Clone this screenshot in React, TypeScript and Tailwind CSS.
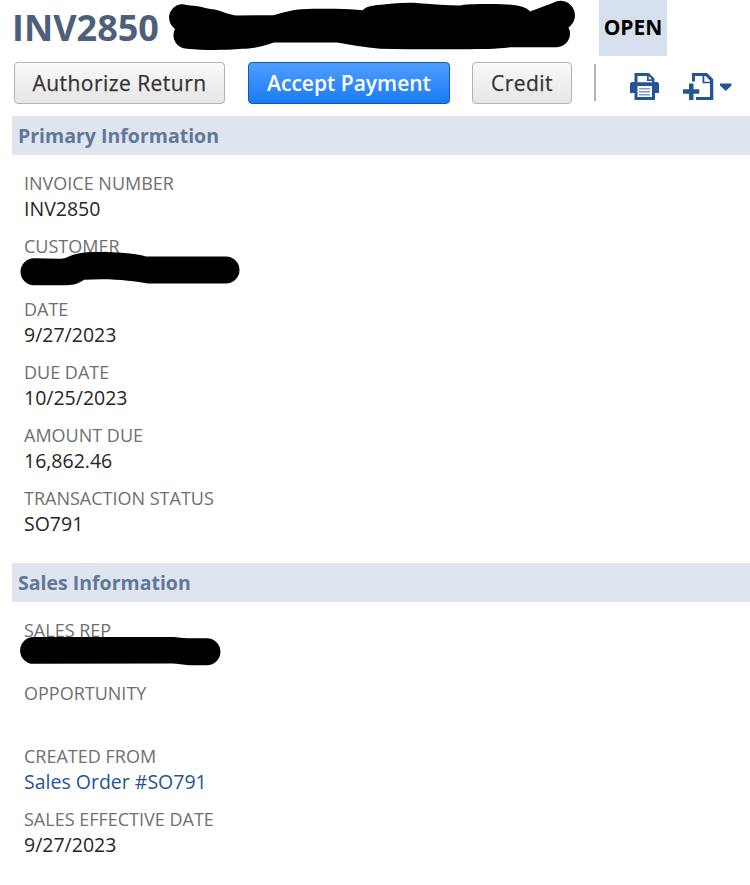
import React from "react";

type FieldData = {
  label: string;
  value?: string;
  link?: boolean;
  redaction?: React.ReactNode;
};

const customerMark = (
  <svg className="absolute -left-1 top-4" width="222" height="36" viewBox="20 251 222 36">
    <path d="M34 258.300 L60 258.700 C70 259 68 252 98 252 C118 252 136 253.500 146 256.500 L226 256.500 A13.500 13.500 0 0 1 226 283.500 L148 283.500 C134 281 112 278 84 279.800 C78 284 74 285 67 285.300 L34 285.300 A13.500 13.500 0 0 1 34 258.300 Z" />
  </svg>
);

const salesRepMark = (
  <svg className="absolute -left-1 top-[17px]" width="204" height="30" viewBox="20 636 204 30">
    <path d="M33.500 637 L173 637 C178 637 182 638.300 188 638.300 L207 638.300 A13.400 13.400 0 0 1 207 665.200 L189 665.200 C183 665.200 178 663.600 172 663.600 L33.500 663.800 A13.400 13.400 0 0 1 33.500 637 Z" />
  </svg>
);

const primaryFields: FieldData[] = [
  { label: "INVOICE NUMBER", value: "INV2850" },
  { label: "CUSTOMER", redaction: customerMark },
  { label: "DATE", value: "9/27/2023" },
  { label: "DUE DATE", value: "10/25/2023" },
  { label: "AMOUNT DUE", value: "16,862.46" },
  { label: "TRANSACTION STATUS", value: "SO791" },
];

const salesFields: FieldData[] = [
  { label: "SALES REP", redaction: salesRepMark },
  { label: "OPPORTUNITY" },
  { label: "CREATED FROM", value: "Sales Order #SO791", link: true },
  { label: "SALES EFFECTIVE DATE", value: "9/27/2023" },
];

function Field({ label, value, link, redaction }: FieldData) {
  return (
    <div className="relative h-[63px] whitespace-nowrap">
      <div className="text-[18px] leading-[22px] text-[#6f6f6f]">{label}</div>
      <div className="mt-0.5 h-[26px] text-[19.5px] leading-[26px] text-[#262626]">
        {link ? <a className="text-[#255599]">{value}</a> : value}
      </div>
      {redaction}
    </div>
  );
}

function Section({ title, fields }: { title: string; fields: FieldData[] }) {
  return (
    <section className="pb-[13px]">
      <h2 className="ml-3 h-[39px] bg-[#dfe5ef] pl-1.5 text-[19.5px] font-bold leading-[39px] text-[#607799]">
        {title}
      </h2>
      <div className="pl-6 pt-[17px]">
        {fields.map((f) => (
          <Field key={f.label} {...f} />
        ))}
      </div>
    </section>
  );
}

const grayButton =
  "h-[42px] rounded-[4px] border border-[#b2b2b2] bg-linear-to-b from-[#fafafa] to-[#e5e5e5] text-[21px] font-medium leading-[40px] tracking-[0.46px] text-[#333] whitespace-nowrap [-webkit-text-stroke:0.25px_#333]";

export default function App() {
  return (
    <main className="h-[885px] w-[750px] overflow-hidden bg-white font-['Open_Sans',sans-serif]">
      <header className="flex h-14">
        <h1 className="ml-3 w-[157px] text-[36px] font-bold leading-[56px] text-[#4d5f79]">INV2850</h1>
        <svg width="430" height="56" viewBox="169 0 430 56">
          <path d="M175 29 C171 26 169 22 169 17 A13.500 13.500 0 0 1 182 4.300 C185 4.300 186 5.300 190 5.500 C201 6 207 9 215 9.600 C222 11 229 15.300 237 15.500 L273 15.200 C284 13 291 9.500 302 9.300 C325 8.400 345 9 363 10.200 C365 7 371 5.700 378 5 C392 4 404 2 419 3.300 C434 4.500 446 5.500 461 5.500 C463 4 484 4 495 4.100 C510 4.200 525 5 530 11.400 L552 3.200 A14 14 0 0 1 568.500 27.500 A13.500 13.500 0 0 1 557 47.200 L510 47.300 C496 49.300 481 49 464 49.300 L408 49.300 L380 48.700 C365 47.300 350 45 337 42.500 L274 42.500 C258 48 251 48.300 242 48.800 C225 50.300 205 50.500 187 48.800 A13.500 13.500 0 0 1 175 29 Z" />
        </svg>
        <div className="w-[68px] bg-[#d5e0ec] text-center text-[21px] font-bold leading-[54px] text-black">
          OPEN
        </div>
      </header>

      <div className="flex h-[60px] items-start pl-3.5 pt-1.5">
        <button className={`${grayButton} w-[211px]`}>Authorize Return</button>
        <button className="ml-[23px] h-[42px] w-[202px] whitespace-nowrap rounded-[4px] border border-[#125ab2] bg-linear-to-b from-[#4c9dff] to-[#187bf2] text-[21px] font-semibold leading-[40px] text-white">
          Accept Payment
        </button>
        <button className={`${grayButton} ml-[22px] w-[100px]`}>Credit</button>
        <div className="ml-[22px] mt-0.5 h-[37px] w-0.5 bg-[#b3b3b3]" />
        <svg className="ml-[34px] mt-[11px]" width="29" height="27" viewBox="0 0 29 27" fill="#255599">
          <path d="M4.500 0H19L24.500 5.500V9H27.500L29 10.500V20H25V27H4.500V20H0V10.500L1.500 9H4.500Z" />
          <path fill="white" d="M7.500 3H17V8H22V9.300H7.500ZM18.700 3L22 6.300H18.700ZM7.500 13H22V24H7.500Z" />
          <path fill="#7c9cc6" d="M9 15H20V16.500H9ZM9 18H20V19.500H9ZM9 21H20V22.500H9Z" />
        </svg>
        <svg className="ml-6 mt-[11px]" width="31" height="27" viewBox="0 0 31 27" fill="#255599">
          <path d="M9 8.500V0H24L30.300 6.300V27H13V24H27V10.300H19.500V3H12V8.500Z" />
          <path fill="white" d="M21.300 3H22.500L27 7.500V8.700H21.300Z" />
          <path d="M6 10.500H10.500V16.300H16.300V20.700H10.500V27H6V20.700H0V16.300H6Z" />
        </svg>
        <svg className="ml-1.5 mt-[21px]" width="12" height="9" viewBox="0 0 12 9" fill="#255599">
          <path d="M0 0.500H11.500V2.500L5.800 8L0 2.500Z" />
        </svg>
      </div>

      <Section title="Primary Information" fields={primaryFields} />
      <Section title="Sales Information" fields={salesFields} />
    </main>
  );
}
